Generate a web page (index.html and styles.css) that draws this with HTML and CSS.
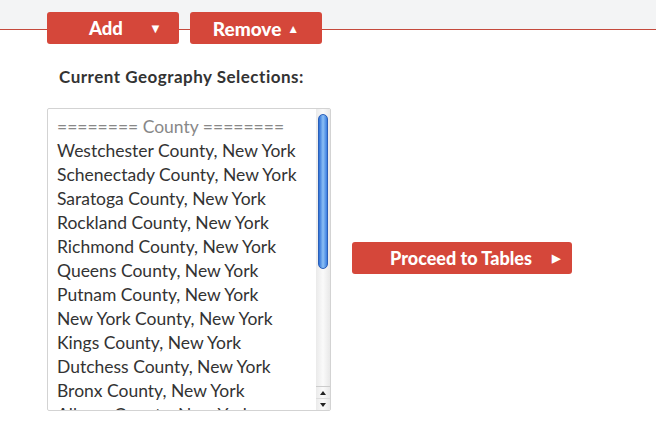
FILE: index.html
```html
<!DOCTYPE html>
<html>
<head>
<meta charset="utf-8">
<link rel="stylesheet" href="styles.css">
</head>
<body>
<div class="topbar">
  <div class="btn-row">
    <button class="btn btn-add"><span class="lbl">Add</span><span class="arr">&#9660;</span></button>
    <button class="btn btn-remove"><span class="lbl">Remove</span><span class="arr">&#9650;</span></button>
  </div>
</div>
<div class="content">
  <div class="left">
    <h3 class="heading">Current Geography Selections:</h3>
    <div class="listbox">
      <ul class="items">
        <li class="sep">======== County ========</li>
        <li>Westchester County, New York</li>
        <li>Schenectady County, New York</li>
        <li>Saratoga County, New York</li>
        <li>Rockland County, New York</li>
        <li>Richmond County, New York</li>
        <li>Queens County, New York</li>
        <li>Putnam County, New York</li>
        <li>New York County, New York</li>
        <li>Kings County, New York</li>
        <li>Dutchess County, New York</li>
        <li>Bronx County, New York</li>
        <li>Albany County, New York</li>
      </ul>
      <div class="scrollbar">
        <div class="thumb"></div>
        <div class="track"></div>
        <div class="arrows"><span class="up"></span><span class="down"></span></div>
      </div>
    </div>
  </div>
  <div class="right">
    <button class="btn btn-proceed"><span class="lbl">Proceed to Tables</span><span class="arr">&#9654;</span></button>
  </div>
</div>
</body>
</html>
```
FILE: styles.css
```css
html, body {
  margin: 0;
  padding: 0;
  background: #fff;
  font-family: "Lato", "Open Sans", sans-serif;
  color: #333;
}
.topbar {
  height: 44px;
  background: linear-gradient(#f3f4f5 0, #f3f4f5 29px, #c4493c 29px, #c4493c 30px, #fff 30px);
  padding-top: 12px;
  box-sizing: border-box;
}
.btn-row {
  display: flex;
  gap: 11px;
  padding-left: 47px;
}
.btn {
  border: none;
  background: #d5473a;
  color: #fff;
  font-family: inherit;
  font-weight: 900;
  font-size: 18.5px;
  height: 32px;
  border-radius: 3px;
  display: flex;
  align-items: center;
  padding: 0;
  cursor: pointer;
}
.btn .arr { font-size: 13px; }
.btn-add { width: 132px; }
.btn-add .lbl { margin-left: 42px; }
.btn-add .arr { margin-left: 26px; }
.btn-remove { width: 132px; justify-content: center; gap: 6px; font-size: 19px; }
.btn-remove .arr { font-size: 12px; }
.content {
  display: flex;
  padding-left: 47px;
}
.left { width: 284px; }
.heading {
  margin: 22px 0 0 12px;
  font-size: 17px;
  font-weight: 700;
  letter-spacing: 0.5px;
  color: #333;
  line-height: 22px;
  white-space: nowrap;
}
.listbox {
  margin-top: 20px;
  height: 303px;
  border: 1px solid #d3d3d3;
  border-radius: 2px;
  box-sizing: border-box;
  display: flex;
  overflow: hidden;
}
.items {
  list-style: none;
  margin: 0;
  padding: 6px 0 0 9px;
  flex: 1;
  font-size: 17.5px;
  line-height: 24px;
  color: #333;
  white-space: nowrap;
  overflow: hidden;
}
.items .sep { color: #888; }
.scrollbar {
  width: 14px;
  display: flex;
  flex-direction: column;
  padding: 5px 0 0 0;
  background: linear-gradient(90deg, #eaeaea, #fafafa 50%, #e8e8e8);
}
.thumb {
  height: 153px;
  margin: 0 2px;
  border-radius: 6px;
  background: linear-gradient(90deg, #2d6fd6, #8cc0f5 50%, #3a7ee0);
  border: 1px solid #2a5fb8;
}
.track { flex: 1; }
.arrows {
  display: flex;
  flex-direction: column;
  border-top: 1px solid #ccc;
}
.arrows span {
  height: 11px;
  display: flex;
  justify-content: center;
  align-items: center;
}
.arrows .up::before {
  content: "";
  border-left: 3px solid transparent;
  border-right: 3px solid transparent;
  border-bottom: 4px solid #222;
}
.arrows .down { border-top: 1px solid #ddd; }
.arrows .down::before {
  content: "";
  border-left: 3px solid transparent;
  border-right: 3px solid transparent;
  border-top: 4px solid #222;
}
.right {
  padding: 198px 0 0 21px;
}
.btn-proceed { width: 220px; font-size: 18px; }
.btn-proceed .lbl { margin-left: 38px; }
.btn-proceed .arr { margin-left: 20px; font-size: 11px; }
```
